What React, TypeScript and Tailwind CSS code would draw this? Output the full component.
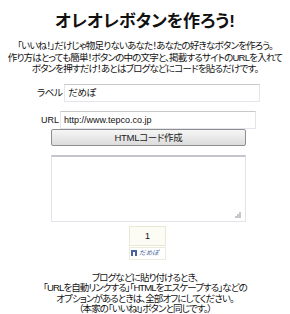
const jp = { fontFamily: '"Liberation Sans", "Noto Sans CJK JP", sans-serif', fontFeatureSettings: '"palt"' }

export default function App() {
  return (
    <div className="w-[290px] h-[314px] bg-white text-[#111] overflow-hidden" style={jp}>
      <h1 className="pt-[12px] h-[32px] text-center text-[17px] leading-[20px] font-bold">
        オレオレボタンを作ろう!
      </h1>
      <p className="mt-[8px] text-center text-[9.5px] leading-[11.5px] tracking-[-0.8px]">
        「いいね！」だけじゃ物足りないあなた！あなたの好きなボタンを作ろう。
        <br />
        作り方はとっても簡単！ボタンの中の文字と、掲載するサイトのURLを入れて
        <br />
        ボタンを押すだけ！あとはブログなどにコードを貼るだけです。
      </p>

      <div className="mt-[9px] h-[18px] flex items-center pl-[37px] text-[9.5px] leading-[12px]">
        <span className="tracking-[-0.5px] mr-[2px]">ラベル</span>
        <div className="w-[196px] h-[18px] border border-[#e2e6ec] border-t-[#c9c9c9] flex items-center pl-[3px] tracking-[-0.5px]">
          だめぽ
        </div>
      </div>

      <div className="mt-[9px] h-[18px] flex items-center pl-[41px] text-[9px] leading-[12px]">
        <span className="mr-[1px]">URL</span>
        <div className="w-[196px] h-[18px] border border-[#e2e6ec] border-t-[#c9c9c9] flex items-center pl-[3px]">
          http://www.tepco.co.jp
        </div>
      </div>

      <button className="block ml-[51px] w-[195px] h-[17px] border border-[#8e8e8e] rounded-[2px] bg-gradient-to-b from-[#f6f6f6] to-[#dcdcdc] text-[9.5px] leading-[15px] font-normal text-[#222] text-center tracking-[-0.3px]">
        HTMLコード作成
      </button>

      <div className="relative ml-[51px] mt-[9px] w-[195px] h-[67px] border border-[#e2e4ea] border-t-[#c4c4cc] border-t-2">
        <svg className="absolute right-[4px] bottom-[3px]" width="6" height="6" viewBox="0 0 6 6">
          <rect x="4" y="0" width="2" height="2" fill="#c8c8c8" />
          <rect x="2" y="2" width="2" height="2" fill="#c8c8c8" />
          <rect x="4" y="2" width="2" height="2" fill="#c8c8c8" />
          <rect x="0" y="4" width="2" height="2" fill="#c8c8c8" />
          <rect x="2" y="4" width="2" height="2" fill="#c8c8c8" />
          <rect x="4" y="4" width="2" height="2" fill="#c8c8c8" />
        </svg>
      </div>

      <div className="ml-[129px] mt-[4px] w-[37px]">
        <div className="h-[20px] border border-[#e8e8d4] bg-[#fcfcf4] flex items-center justify-center text-[9px] leading-[10px]">
          1
        </div>
        <div className="mt-[1px] h-[13px] border border-[#ececdc] bg-white flex items-center pl-[1px] gap-[2px]">
          <div className="w-[6px] h-[6px] bg-[#4a64a0] flex items-end justify-center">
            <div className="w-[2px] h-[4px] bg-white" />
          </div>
          <span className="text-[6.5px] leading-[8px] text-[#3b5998] italic">だめぽ</span>
        </div>
      </div>

      <p className="mt-[13px] text-center text-[9.5px] leading-[10.5px] tracking-[-0.9px]">
        ブログなどに貼り付けるとき、
        <br />
        「URLを自動リンクする」「HTMLをエスケープする」などの
        <br />
        オプションがあるときは、全部オフにしてください。
        <br />
        （本家の「いいね!」ボタンと同じです。）
      </p>
      <div className="ml-[10px] h-[1px] bg-[#e6ecf2]" />
    </div>
  )
}
